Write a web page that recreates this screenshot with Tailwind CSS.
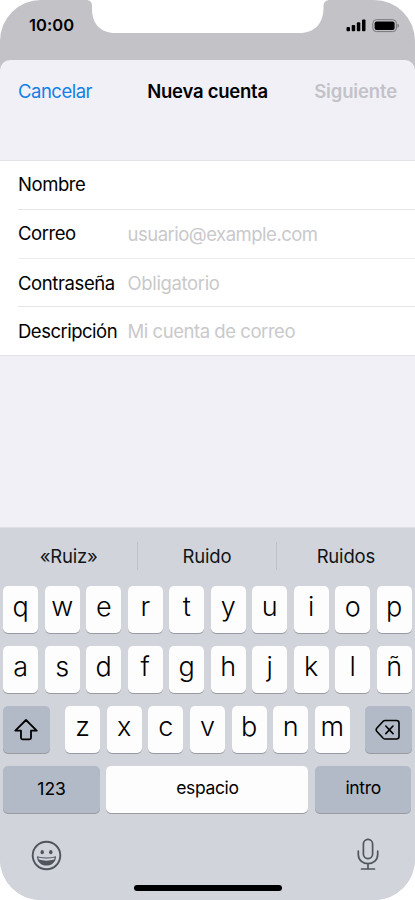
<!DOCTYPE html>
<html lang="es">
<head>
<meta charset="utf-8">
<title>Nueva cuenta</title>
<script src="https://cdn.jsdelivr.net/npm/@tailwindcss/browser@4"></script>
</head>
<body class="bg-white">
<main class="relative flex h-[900px] w-[415px] flex-col overflow-hidden rounded-[41px] bg-[#c3c2c7] font-[Inter,sans-serif] whitespace-nowrap text-black">
  <svg class="absolute top-0 left-0" width="415" height="34" viewBox="0 0 415 34"><path d="M86 0C90 0 92 2 92 6V9C92 24 101 33 115 33H300C314 33 323 24 323.500 9V6C323.500 2 326 0 330 0Z" fill="#fff"/></svg>
  <header class="flex h-[60px] shrink-0 justify-between pr-[15px] pl-[29px]">
    <time class="pt-[13px] text-[16.500px] leading-[24px] font-semibold tracking-[0.050px]">10:00</time>
    <div class="flex gap-[6px] pt-[19px]">
      <svg width="20" height="13" viewBox="0 0 20 13"><rect x="0.500" y="8" width="3.500" height="4.300" rx="1"/><rect x="5.700" y="6" width="3.500" height="6.300" rx="1"/><rect x="10.800" y="3.200" width="3.500" height="9.100" rx="1"/><rect x="16" y="0.500" width="3.500" height="11.800" rx="1"/></svg>
      <svg width="28" height="14" viewBox="0 0 28 14"><rect x="0.800" y="0.700" width="23.600" height="11.900" rx="3.600" fill="none" stroke="#77767b"/><rect x="2.600" y="2.400" width="20" height="8.500" rx="2"/><path d="M25.500 4.700C27.500 5.400 27.500 8 25.500 8.700Z" fill="#77767b"/></svg>
    </div>
  </header>
  <section class="flex h-[467px] shrink-0 flex-col rounded-t-[10px] bg-[#f1f0f6]">
    <nav class="grid h-[100px] grid-cols-3 px-[18px] pt-[18px] text-[18.500px] leading-[26px]">
      <span class="tracking-[-0.5px] text-[#137fe6]">Cancelar</span>
      <h1 class="justify-self-center font-semibold tracking-[-0.25px]">Nueva cuenta</h1>
      <span class="justify-self-end font-semibold tracking-[-0.15px] text-[#c3c2c7]">Siguiente</span>
    </nav>
    <div class="flex h-[196px] flex-col border-y border-[#e4e4e8] bg-white pl-[18px] text-[18.500px]">
      <div class="flex h-[49px] border-b border-[#e6e6e8] pt-[10px] leading-[26px]"><span class="w-[109.500px] tracking-[-0.45px]">Nombre</span></div>
      <div class="flex h-[49px] border-b border-[#ededef] pt-[10px] leading-[26px]"><span class="w-[109.500px] tracking-[-0.45px]">Correo</span><span class="pt-px tracking-[-0.5px] text-[#c9c9cb]">usuario@example.com</span></div>
      <div class="flex h-[48px] border-b border-[#e6e6e8] pt-[11px] leading-[26px]"><span class="w-[109.500px] tracking-[-0.4px]">Contraseña</span><span class="tracking-[-0.35px] text-[#c9c9cb]">Obligatorio</span></div>
      <div class="flex h-[48px] pt-[11px] leading-[26px]"><span class="w-[109.500px] tracking-[-0.5px]">Descripción</span><span class="tracking-[-0.45px] text-[#c9c9cb]">Mi cuenta de correo</span></div>
    </div>
  </section>
  <section class="flex h-[373px] shrink-0 flex-col border-t border-[#dcdee2] bg-[#d1d5db]">
    <div class="mt-[14px] mb-[16px] grid h-[28px] grid-cols-3 text-center text-[18.500px] leading-[28px] tracking-[-0.2px] text-[#111518]">
      <span class="border-r border-[#bec2c8]">«Ruiz»</span><span class="border-r border-[#bec2c8]">Ruido</span><span>Ruidos</span>
    </div>
    <div class="flex flex-col gap-[13px] px-[3.400px] text-center text-[27px] leading-[41px] font-light">
      <div class="grid h-[47px] grid-cols-10 gap-[6.800px] *:rounded-[5px] *:bg-[#fdfdfe] *:shadow-[0_1px_0_#989ba0]"><kbd class="font-[Inter]">q</kbd><kbd class="font-[Inter]">w</kbd><kbd class="font-[Inter]">e</kbd><kbd class="font-[Inter]">r</kbd><kbd class="font-[Inter]">t</kbd><kbd class="font-[Inter]">y</kbd><kbd class="font-[Inter]">u</kbd><kbd class="font-[Inter]">i</kbd><kbd class="font-[Inter]">o</kbd><kbd class="font-[Inter]">p</kbd></div>
      <div class="grid h-[47px] grid-cols-10 gap-[6.800px] *:rounded-[5px] *:bg-[#fdfdfe] *:shadow-[0_1px_0_#989ba0]"><kbd class="font-[Inter]">a</kbd><kbd class="font-[Inter]">s</kbd><kbd class="font-[Inter]">d</kbd><kbd class="font-[Inter]">f</kbd><kbd class="font-[Inter]">g</kbd><kbd class="font-[Inter]">h</kbd><kbd class="font-[Inter]">j</kbd><kbd class="font-[Inter]">k</kbd><kbd class="font-[Inter]">l</kbd><kbd class="font-[Inter]">ñ</kbd></div>
      <div class="flex h-[47px] justify-between">
        <div class="flex w-[46.500px] items-center justify-center rounded-[5px] bg-[#b1bac6] pr-px shadow-[0_1px_0_#989ba0]">
          <svg width="26" height="24" viewBox="0 0 26 24" fill="none" stroke="#000" stroke-width="1.800" stroke-linejoin="round"><path d="M13 2L2.300 12.700H8V19.800Q8 21.300 9.500 21.300H16.500Q18 21.300 18 19.800V12.700H23.700Z"/></svg>
        </div>
        <div class="grid w-[284.500px] grid-cols-7 gap-[6.800px] *:rounded-[5px] *:bg-[#fdfdfe] *:shadow-[0_1px_0_#989ba0]"><kbd class="font-[Inter]">z</kbd><kbd class="font-[Inter]">x</kbd><kbd class="font-[Inter]">c</kbd><kbd class="font-[Inter]">v</kbd><kbd class="font-[Inter]">b</kbd><kbd class="font-[Inter]">n</kbd><kbd class="font-[Inter]">m</kbd></div>
        <div class="flex w-[46.500px] items-center justify-center rounded-[5px] bg-[#b1bac6] pr-px shadow-[0_1px_0_#989ba0]">
          <svg width="26" height="22" viewBox="0 0 26 22" fill="none" stroke="#000" stroke-width="1.600" stroke-linecap="round" stroke-linejoin="round"><path d="M10 1.500H21.500Q24 1.500 24 4V17.500Q24 20 21.500 20H10Q9 20 8.200 19.200L1.700 12.200Q0.700 10.800 1.700 9.300L8.200 2.300Q9 1.500 10 1.500ZM10.800 7L18 14.600M18 7L10.800 14.600"/></svg>
        </div>
      </div>
      <div class="flex h-[47px] gap-[6.500px] text-[17.500px] leading-[43px] font-normal tracking-[-0.35px] *:rounded-[5px] *:shadow-[0_1px_0_#989ba0]">
        <div class="w-[96.500px] bg-[#b1bac6] pt-px tracking-normal">123</div>
        <div class="w-[202px] bg-[#fdfdfe]">espacio</div>
        <div class="w-[96.500px] bg-[#b1bac6]">intro</div>
      </div>
    </div>
    <footer class="flex justify-between pt-[24px] pr-[31px] pl-[30px]">
      <svg class="mt-[2px]" width="33" height="33" viewBox="0 0 33 33"><circle cx="16.500" cy="16.500" r="13.800" fill="none" stroke="#50555d" stroke-width="1.900"/><ellipse cx="12.200" cy="13.200" rx="1.700" ry="2.100" fill="#50555d"/><ellipse cx="20.800" cy="13.200" rx="1.700" ry="2.100" fill="#50555d"/><path d="M7 17.200Q16.500 19.600 26 17.200C26 23 21.800 26.500 16.500 26.500S7 23 7 17.200Z" fill="#50555d"/><path d="M8.300 18.600Q16.500 20.500 24.700 18.600L24.200 20.600Q16.500 22.700 8.800 20.600Z" fill="#d1d5db"/></svg>
      <svg width="32" height="34" viewBox="0 0 32 34" fill="none" stroke="#50555d" stroke-width="1.700" stroke-linecap="round"><rect x="11.400" y="2.400" width="9.200" height="19.200" rx="4.600"/><path d="M6.300 14V17.500C6.300 23 10.500 26.600 16 26.600S25.700 23 25.700 17.500V14M16 26.600V31.800M9.500 32H22.500"/></svg>
    </footer>
  </section>
  <div class="absolute top-[885px] left-[133.500px] h-[6px] w-[148.500px] rounded-full bg-black"></div>
</main>
</body>
</html>
